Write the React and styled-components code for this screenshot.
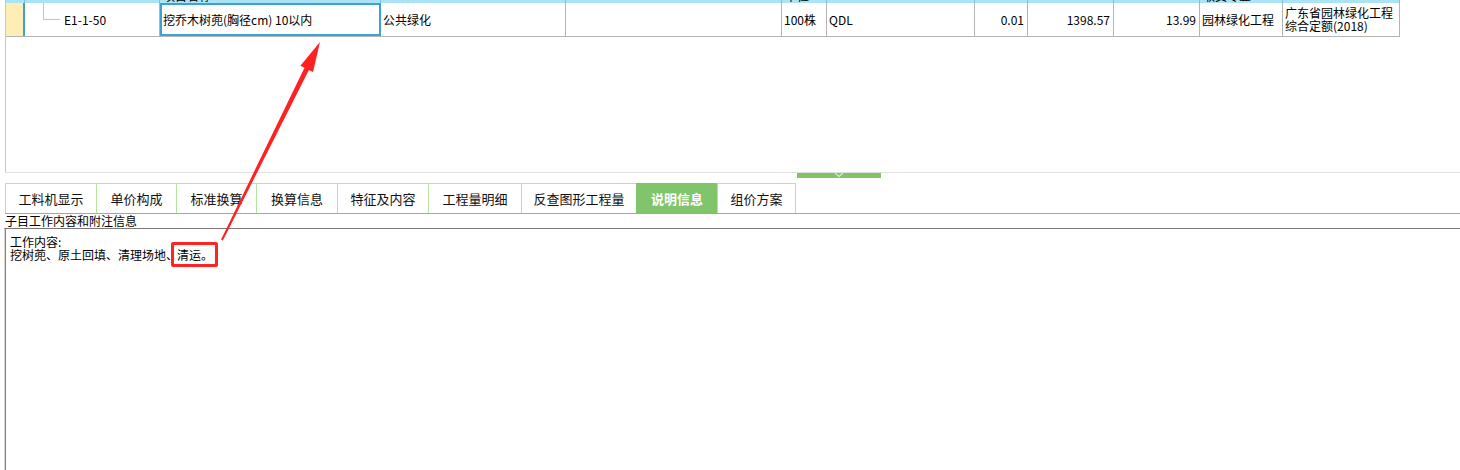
import React from "react"
import styled, { createGlobalStyle, css } from "styled-components"

const GlobalStyle = createGlobalStyle`
  html, body {
    margin: 0;
    padding: 0;
    background: #ffffff;
  }
  body {
    font-family: "Noto Sans CJK SC", "Liberation Sans", sans-serif;
    font-size: 12px;
    color: #000;
  }
`

const columns = [
  { w: 20, head: "" },
  { w: 135, head: "" },
  { w: 221, head: "项目名称" },
  { w: 185, head: "" },
  { w: 216, head: "" },
  { w: 45, head: "单位" },
  { w: 148, head: "" },
  { w: 53, head: "" },
  { w: 86, head: "" },
  { w: 86, head: "" },
  { w: 83, head: "取费专业" },
  { w: 117, head: "" },
]

const tabs = [
  { label: "工料机显示", w: 91 },
  { label: "单价构成", w: 80 },
  { label: "标准换算", w: 80 },
  { label: "换算信息", w: 81 },
  { label: "特征及内容", w: 91 },
  { label: "工程量明细", w: 93 },
  { label: "反查图形工程量", w: 115 },
  { label: "说明信息", w: 81, active: true },
  { label: "组价方案", w: 79 },
]

const Page = styled.div`
  position: relative;
  width: 1460px;
  height: 470px;
  overflow: hidden;
  display: flex;
  flex-direction: column;
`

const GridPane = styled.div`
  height: 172px;
  margin-left: 5px;
  border-left: 1px solid #c8c8c8;
  overflow: hidden;
  flex-shrink: 0;
`

const GridScroll = styled.div`
  margin-top: -17px;
  margin-left: -1px;
  width: fit-content;
`

const HeaderRow = styled.div`
  display: flex;
  height: 20px;
  background: #aae3f5;
`

const HeadCell = styled.div`
  box-sizing: border-box;
  width: ${({ w }) => w}px;
  border-right: 1px solid #7fc3dc;
  padding: 6px 3px 0;
  line-height: 14px;
  white-space: nowrap;
  overflow: hidden;
`

const DataRow = styled.div`
  display: flex;
  height: 33px;
  border-bottom: 1px solid #b4b4b4;
`

const Cell = styled.div`
  box-sizing: border-box;
  width: ${({ w }) => w}px;
  height: 33px;
  border-right: 1px solid #b4b4b4;
  display: flex;
  align-items: center;
  padding: 0 2px;
  white-space: nowrap;
  overflow: hidden;
  ${({ align }) =>
    align === "right" &&
    css`
      justify-content: flex-end;
      padding-right: 3px;
    `}
  ${({ indicator }) =>
    indicator &&
    css`
      background: #feeeb6;
      border-right: 2px solid #3aa3d3;
    `}
  ${({ selected }) =>
    selected &&
    css`
      border: 2px solid #3aa3d3;
      padding-left: 1px;
    `}
  ${({ wrap }) =>
    wrap &&
    css`
      white-space: normal;
      line-height: 13px;
      align-items: flex-start;
      padding-top: 3px;
    `}
`

const TreeCell = styled(Cell)`
  position: relative;
  padding-left: 39px;
`

const TreeLine = styled.span`
  position: absolute;
  left: 18px;
  top: 0;
  width: 16px;
  height: 16px;
  border-left: 1px solid #c4c4c4;
  border-bottom: 1px solid #c4c4c4;
`

const Splitter = styled.div`
  height: 10px;
  margin-left: 5px;
  border-top: 1px solid #e0e0e0;
  flex-shrink: 0;
  display: flex;
  padding-left: 792px;
`

const Handle = styled.div`
  width: 84px;
  height: 5px;
  background: #80c36b;
  display: flex;
  justify-content: center;
  align-items: flex-start;
`

const TabBar = styled.div`
  display: flex;
  margin-left: 5px;
  height: 30px;
  border-bottom: 1px solid #7ec46a;
  flex-shrink: 0;
`

const Tab = styled.div`
  box-sizing: border-box;
  width: ${({ w }) => w}px;
  height: 30px;
  border-top: 1px solid #b6e3a0;
  border-left: 1px solid #b6e3a0;
  display: flex;
  align-items: center;
  justify-content: center;
  font-size: 13px;
  color: #111;
  &:last-child {
    border-right: 1px solid #b6e3a0;
  }
  ${({ active }) =>
    active &&
    css`
      background: #80c46c;
      border-color: #80c46c;
      color: #fff;
      font-weight: bold;
    `}
`

const Caption = styled.div`
  margin-left: 5px;
  height: 14px;
  line-height: 14px;
  font-size: 12px;
  flex-shrink: 0;
`

const NoteBox = styled.div`
  flex: 1;
  margin-left: 4px;
  border-top: 1px solid #777;
  border-left: 1px solid #d6d6d6;
  box-shadow: inset 1px 0 0 #808080;
  padding: 6px 5px;
  line-height: 13px;
  font-size: 12px;
`

const Mark = styled.span`
  display: inline-block;
  margin-left: -7px;
  padding: 3px 2px 3px 3px;
  border: 3px solid #ff2424;
  border-radius: 2px;
  line-height: 13px;
  margin-top: -6px;
  vertical-align: top;
`

const Arrow = styled.svg`
  position: absolute;
  left: 0;
  top: 0;
  pointer-events: none;
`

const Chevron = () => (
  <svg width="10" height="5" viewBox="0 0 10 5">
    <path d="M1 0 L5 3.5 L9 0" fill="none" stroke="#d9efd0" strokeWidth="1.2" />
  </svg>
)

const App = () => {
  return (
    <>
      <GlobalStyle />
      <Page>
        <GridPane>
          <GridScroll>
            <HeaderRow>
              {columns.map((c, i) => (
                <HeadCell key={i} w={c.w}>
                  {c.head}
                </HeadCell>
              ))}
            </HeaderRow>
            <DataRow>
              <Cell w={20} indicator />
              <TreeCell w={135}>
                <TreeLine />
                E1-1-50
              </TreeCell>
              <Cell w={221} selected>
                挖乔木树蔸(胸径cm) 10以内
              </Cell>
              <Cell w={185}>公共绿化</Cell>
              <Cell w={216} />
              <Cell w={45}>100株</Cell>
              <Cell w={148}>QDL</Cell>
              <Cell w={53} align="right">
                0.01
              </Cell>
              <Cell w={86} align="right">
                1398.57
              </Cell>
              <Cell w={86} align="right">
                13.99
              </Cell>
              <Cell w={83}>园林绿化工程</Cell>
              <Cell w={117} wrap>
                广东省园林绿化工程综合定额(2018)
              </Cell>
            </DataRow>
          </GridScroll>
        </GridPane>
        <Splitter>
          <Handle>
            <Chevron />
          </Handle>
        </Splitter>
        <TabBar>
          {tabs.map((t) => (
            <Tab key={t.label} w={t.w} active={t.active}>
              {t.label}
            </Tab>
          ))}
        </TabBar>
        <Caption>子目工作内容和附注信息</Caption>
        <NoteBox>
          <div>工作内容:</div>
          <div>
            挖树蔸、原土回填、清理场地、<Mark>清运。</Mark>
          </div>
        </NoteBox>
        <Arrow width="1460" height="470">
          <polygon
            points="221.1,239.6 222.9,240.4 308.9,70 313,72 320,42 300.4,65.8 304.5,67.8"
            fill="#ff2020"
          />
        </Arrow>
      </Page>
    </>
  )
}

export default App
